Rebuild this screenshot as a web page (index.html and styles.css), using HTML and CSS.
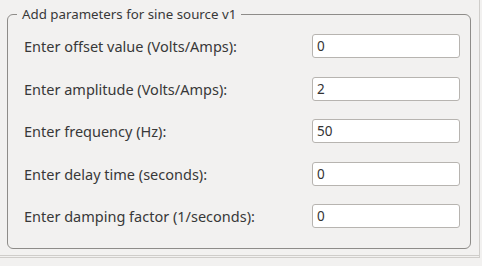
FILE: index.html
```html
<!DOCTYPE html>
<html lang="en">
<head>
  <meta charset="UTF-8" />
  <meta name="viewport" content="width=device-width, initial-scale=1.0"/>
  <title>Sine source</title>
  <link rel="stylesheet" href="styles.css">
</head>
<body>

<div class="frame">
  <fieldset class="param-box">
    <legend>Add parameters for sine source v1</legend>
    <div class="param-row">
      <label for="offset">Enter offset value (Volts/Amps):</label>
      <input type="text" id="offset" value="0"/>
    </div>
    <div class="param-row">
      <label for="amplitude">Enter amplitude (Volts/Amps):</label>
      <input type="text" id="amplitude" value="2"/>
    </div>
    <div class="param-row">
      <label for="frequency">Enter frequency (Hz):</label>
      <input type="text" id="frequency" value="50"/>
    </div>
    <div class="param-row">
      <label for="delay">Enter delay time (seconds):</label>
      <input type="text" id="delay" value="0"/>
    </div>
    <div class="param-row">
      <label for="damping">Enter damping factor (1/seconds):</label>
      <input type="text" id="damping" value="0"/>
    </div>
  </fieldset>
</div>

</body>
</html>
```

FILE: styles.css
```css
body {
  margin: 0;
  font-family: 'Noto Sans', 'Open Sans', sans-serif;
  font-size: 14.5px;
  color: #383838;
  background-color: #f2f1f0;
}
.frame {
  width: 480px;
  height: 258px;
  border-right: 1px solid #cfcdca;
  border-bottom: 3px double #cfcdca;
  padding-top: 5px;
  box-sizing: border-box;
}
.param-box {
  margin: 0 0 0 7px;
  width: 464px;
  box-sizing: border-box;
  border: 1px solid #8e8c89;
  border-radius: 6px;
  padding: 2px 10px 10px 16px;
}
.param-box legend {
  margin-left: -7px;
  padding: 0 5px;
  font-size: 13.3px;
  line-height: 18px;
}
.param-row {
  display: flex;
  align-items: center;
  justify-content: space-between;
  height: 42.5px;
}
.param-row input {
  width: 148px;
  height: 24px;
  box-sizing: border-box;
  border: 1px solid #b7b4b0;
  border-radius: 3px;
  padding: 0 4px;
  font-family: inherit;
  font-size: 13.5px;
  color: #333;
  background: white;
  outline: none;
}
```
